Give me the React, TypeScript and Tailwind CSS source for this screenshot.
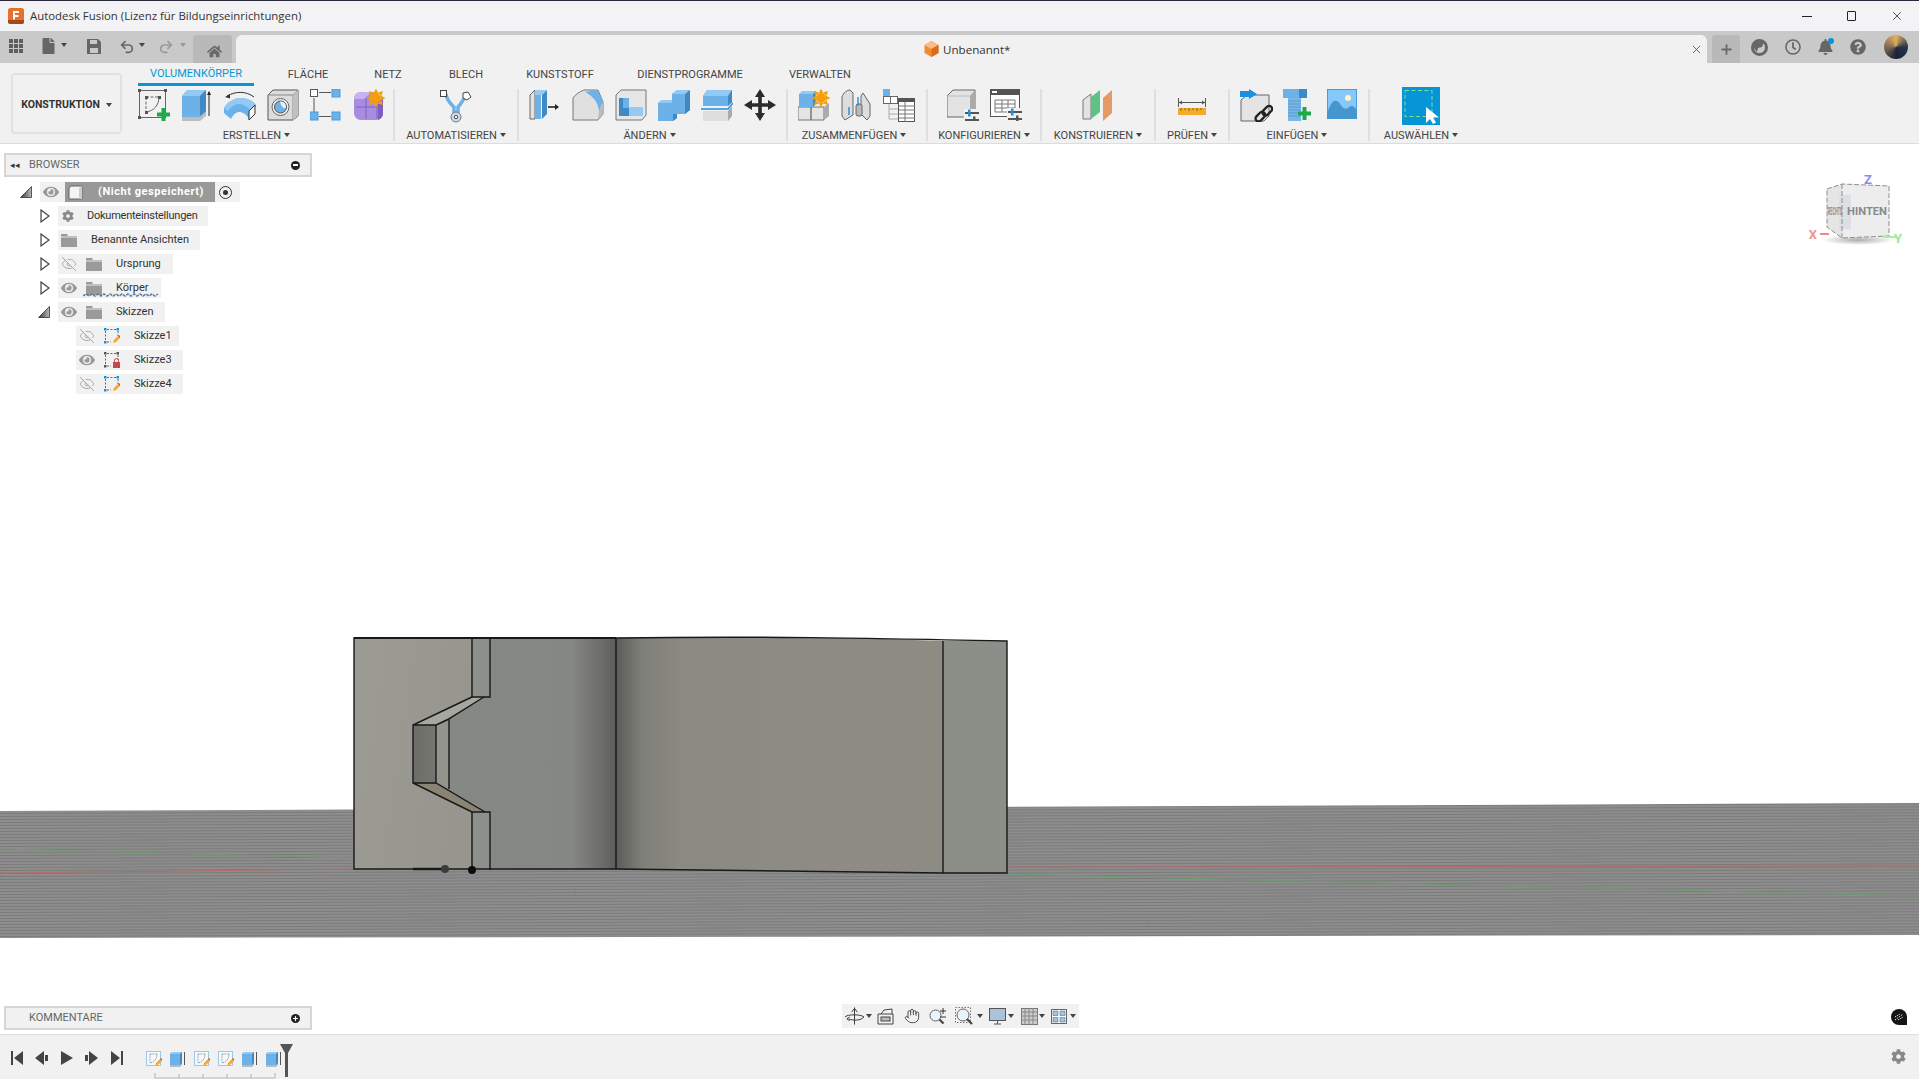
import type { ReactNode } from 'react'
import { FaBell, FaCog, FaEye, FaFile, FaHome, FaQuestionCircle, FaRegClock } from 'react-icons/fa'
import { EyeOff, Hand, Plus, Redo2, Undo2, X } from 'lucide-react'

const B = { light: '#93c9f2', mid: '#6cb2e8', dark: '#3f8ac4', gray: '#d9d9d9', grayD: '#a9a9a9', line: '#555' }

function Caret({ light }: { light?: boolean }) {
    return <span className={`inline-block h-0 w-0 border-x-[3px] border-t-[4px] border-x-transparent ${light ? 'border-t-[#999]' : 'border-t-[#444]'}`} />
}

function Ico({ children, s = 32 }: { children: ReactNode; s?: number }) {
    return <svg width={s} height={s} viewBox={`0 0 ${s} ${s}`}>{children}</svg>
}

const PlusG = ({ x, y }: { x: number; y: number }) => (
    <path d={`M${x + 4.5} ${y}h4v4.500h4.500v4h-4.500v4.500h-4v-4.500h-4.500v-4h4.500z`} fill="#1eaa4c" />
)

const Star = ({ cx, cy }: { cx: number; cy: number }) => (
    <g fill="#f59e0b">
        <circle cx={cx} cy={cy} r="5" />
        <path d={`M${cx} ${cy - 9.500}l2.500 5h-5zM${cx} ${cy + 9.500}l2.500 -5h-5zM${cx - 9.500} ${cy}l5 -2.500v5zM${cx + 9.500} ${cy}l-5 -2.500v5zM${cx - 7} ${cy - 7}l5 1.500l-3.500 3.500zM${cx + 7} ${cy - 7}l-5 1.500l3.500 3.500zM${cx - 7} ${cy + 7}l5 -1.500l-3.500 -3.500zM${cx + 7} ${cy + 7}l-5 -1.500l3.500 -3.500z`} />
    </g>
)

const SketchNew = () => (
    <Ico>
        <g fill="none" stroke="#666">
            <rect x="1.5" y="1.5" width="26" height="27" />
            <path d="M8 8h13M8 8v15" strokeDasharray="3 1.500" />
            <path d="M21 8c0 8 -5 14 -13 15" />
        </g>
        <g fill="#555">
            <rect x="0" y="0" width="3" height="3" /><rect x="26" y="0" width="3" height="3" /><rect x="0" y="27" width="3" height="3" />
            <rect x="7" y="7" width="3" height="3" /><rect x="20" y="7" width="3" height="3" /><rect x="7" y="22" width="3" height="3" />
        </g>
        <PlusG x={19} y={19} />
    </Ico>
)

const Extrude = () => (
    <Ico>
        <path d="M1 7l5 -6h19v25l-6 4H1z" fill={B.mid} />
        <path d="M1 7l5 -6h19l-6 6z" fill={B.light} />
        <path d="M19 7l6 -6v21l-6 5z" fill={B.dark} />
        <path d="M1 28h18l6 -5v4l-6 5H1z" fill="#bdbdbd" />
        <path d="M28 27V3" stroke="#222" fill="none" />
        <path d="M26 6l2 -4l2 4z" fill="#222" />
    </Ico>
)

const Revolve = () => (
    <Ico s={34}>
        <path d="M1 19C5 12 12 9 18 9C24 9 29 11 33 16L26 30C23 25 20 23 16 23C13 23 10 26 8 30L1 24z" fill={B.mid} />
        <path d="M1 19C5 12 12 9 18 9C24 9 29 11 33 16L28 22C24 17 20 15 16 15C11 15 7 19 5 22z" fill={B.light} />
        <path d="M26 22l6 -6v9l-6 6z" fill="#f7f7f7" stroke="#333" />
        <path d="M31 8C23 2 13 2 4 7" stroke="#333" fill="none" />
        <path d="M2 8l5 -3l0 4.500z" fill="#333" />
    </Ico>
)

const Hole = () => (
    <Ico>
        <path d="M1 6l5 -5h25v26l-5 4H1z" fill="#dcdcdc" stroke="#555" />
        <path d="M26 6v25M1 6h25l5 -5" fill="none" stroke="#888" />
        <path d="M26 6l5 -5v26l-5 4z" fill="#c0c0c0" />
        <circle cx="13.500" cy="18" r="8.500" fill="#eee" stroke="#666" />
        <circle cx="13.500" cy="18" r="6" fill={B.mid} stroke="#555" />
        <path d="M13 12.500a5.500 5.500 0 0 1 6 6c-2 2 -5 -1 -6 -6z" fill="#e8f2fb" />
    </Ico>
)

const Derive = () => (
    <Ico>
        <path d="M9 3.500h12M4 9v15M9 27.500h12" stroke="#555" />
        <rect x="0.5" y="0.5" width="7" height="7" fill="#fff" stroke="#555" />
        <rect x="22" y="0" width="8" height="8" fill={B.mid} stroke="#4d9ad6" />
        <rect x="0" y="23" width="8" height="8" fill={B.mid} stroke="#4d9ad6" />
        <rect x="22" y="23" width="8" height="8" fill={B.mid} stroke="#4d9ad6" />
    </Ico>
)

const Purple = () => (
    <Ico>
        <path d="M1 10C1 6 4 3 8 3h14l8 6v15c0 4 -3 7 -7 7H8c-4 0 -7 -3 -7 -7z" fill="#a98be0" />
        <path d="M1 10C1 6 4 3 8 3h10l-7 7z" fill="#c6b2ee" />
        <path d="M3 18h21M13 9v21M24 12v18" stroke="#7f62c2" fill="none" />
        <path d="M25 14l5 -5v16c0 2 -2 5 -5 6z" fill="#7e5fc0" />
        <Star cx={23} cy={9} />
    </Ico>
)

const Auto = () => (
    <Ico s={34}>
        <path d="M7 5c1 7 5 10 8 13l0 6h4l0 -6c3 -3 5 -7 7 -10" fill="none" stroke={B.mid} strokeWidth="3.5" />
        <rect x="1.5" y="1.5" width="6" height="6" fill="#fff" stroke="#444" />
        <path d="M24 4l5 -1l3 5l-4 3l-4 -2z" fill="#fff" stroke="#444" />
        <circle cx="17" cy="28" r="5" fill="#d7d7d7" stroke="#5b7f9e" />
        <circle cx="17" cy="28" r="1.7" fill="#fff" stroke="#555" />
    </Ico>
)

const PressPull = () => (
    <Ico>
        <path d="M1 6l5 -5v29H1z" fill="#e2e2e2" stroke="#666" />
        <path d="M6 1h11l-5 5v24H6z" fill={B.mid} />
        <path d="M6 1h12l-5 5H6z" fill={B.light} />
        <path d="M13 6l5 -5v24l-5 5z" fill={B.dark} />
        <path d="M19 18h8" stroke="#222" strokeWidth="1.6" />
        <path d="M26 15l4 3l-4 3z" fill="#222" />
    </Ico>
)

const Fillet = () => (
    <Ico>
        <path d="M1 9c3 -4 6 -6 11 -8h14l5 12v12l-5 6H1z" fill="#e0e0e0" stroke="#777" />
        <path d="M13 3l12 -2l6 11l-4 10c-1 -9 -6 -15 -14 -19z" fill={B.mid} />
        <path d="M27 22l4 -9v12l-5 6z" fill="#bbb" />
    </Ico>
)

const Shell = () => (
    <Ico>
        <path d="M1 6l5 -5h25v25l-4 5H1z" fill="#e6e6e6" stroke="#777" />
        <path d="M4 9h10v18H4z" fill={B.dark} />
        <path d="M14 18h14v9H14z" fill={B.light} />
        <path d="M8 9h6v10H8z" fill={B.mid} />
    </Ico>
)

const Combine = () => (
    <Ico>
        <path d="M0 14l4 -3h10V5l5 -4h13v20l-5 4h-8v4l-4 3H0z" fill={B.mid} />
        <path d="M14 5l5 -4h13l-5 4zM0 14l4 -3h10v3z" fill={B.light} />
        <path d="M27 5l5 -4v20l-5 4zM15 25l4 0v4l-4 3z" fill={B.dark} />
    </Ico>
)

const Split = () => (
    <Ico>
        <path d="M2 7l4 -6h25v12l-4 4H2z" fill={B.mid} />
        <path d="M2 7l4 -6h25l-4 6z" fill={B.light} />
        <path d="M27 7l4 -6v12l-4 4z" fill={B.dark} />
        <path d="M0 20h27l5 -6" stroke="#1b8fe0" strokeWidth="1.4" fill="none" />
        <path d="M2 22h25l4 -5v10l-4 5H2z" fill="#dedede" />
        <path d="M27 22l4 -5v10l-4 5z" fill="#aaa" />
    </Ico>
)

const Move = () => (
    <Ico>
        <path d="M16 0l5 8h-3.200v6.200H24V11l8 5l-8 5v-3.200h-6.200V24H21l-5 8l-5 -8h3.200v-6.200H8V21l-8 -5l8 -5v3.200h6.200V8H11z" fill="#2b2b2b" />
    </Ico>
)

const NewComp = () => (
    <Ico>
        <path d="M0 18h13v13H0zM13 18h13v13H13z" fill="#e4e4e4" stroke="#777" />
        <path d="M26 18l5 -4v13l-5 4z" fill="#aaa" />
        <path d="M1 5h14v13H1z" fill={B.mid} />
        <path d="M1 5l3 -3h14l-3 3z" fill={B.light} />
        <path d="M15 5l3 -3v13l-3 3z" fill={B.dark} />
        <Star cx={23} cy={9} />
    </Ico>
)

const Joint = () => (
    <Ico>
        <path d="M1 8c1 -4 5 -7 8 -7l3 3v22l-8 5l-3 -4z" fill="#ddd" stroke="#666" />
        <path d="M22 4l7 11v12l-3 4l-6 -6V7z" fill="#ddd" stroke="#666" />
        <rect x="15" y="15" width="6" height="12" rx="2" fill="#bbb" stroke="#666" />
        <path d="M17 8v9M8 18v8" stroke="#1b8fe0" strokeWidth="1.4" />
    </Ico>
)

const TableTree = () => (
    <Ico s={34}>
        <rect x="0" y="0" width="7" height="7" fill={B.mid} />
        <rect x="0.5" y="7.5" width="7" height="7" fill="#fff" stroke="#666" />
        <rect x="7.5" y="7.5" width="7" height="7" fill="#fff" stroke="#666" />
        <path d="M6 15v15h9M6 20h9M6 25h9" stroke="#aaa" fill="none" />
        <rect x="15.5" y="9.5" width="16" height="23" fill="#fff" stroke="#555" />
        <rect x="15" y="9" width="17" height="4" fill="#555" />
        <path d="M16 17h16M16 21h16M16 25h16M16 29h16M22 13v20" stroke="#777" />
    </Ico>
)

const Sliders = ({ x, y }: { x: number; y: number }) => (
    <g>
        <path d={`M${x} ${y}h14M${x} ${y + 7}h14`} stroke="#555" strokeWidth="2" />
        <rect x={x + 3} y={y - 3.5} width="2.5" height="7" fill="#1b8fe0" />
        <rect x={x + 8} y={y + 3.5} width="2.5" height="7" fill="#555" />
    </g>
)

const ConfigCube = () => (
    <Ico>
        <path d="M0 7l6 -6h22v27H0z" fill="#e3e3e3" stroke="#666" />
        <path d="M23 7l5 -6v27h-5z" fill="#aaa" />
        <path d="M0 7h23" stroke="#bbb" />
        <rect x="17" y="20" width="15" height="12" fill="#f1f1f1" />
        <Sliders x={18} y={24} />
    </Ico>
)

const ConfigTable = () => (
    <Ico>
        <rect x="0.5" y="0.5" width="29" height="27" fill="#fff" stroke="#555" />
        <rect x="0" y="0" width="30" height="6" fill="#555" />
        <rect x="2" y="2" width="5" height="2" fill="#fff" />
        <path d="M5 11h20v12H5zM5 15h20M5 19h20M12 11v12M18 11v12" fill="none" stroke="#777" />
        <rect x="17" y="19" width="15" height="13" fill="#f1f1f1" />
        <Sliders x={18} y={23} />
    </Ico>
)

const Plane = () => (
    <Ico>
        <path d="M1 11l8 -6v25H1z" fill="#e3e3e3" stroke="#777" />
        <path d="M9 8l9 -7v22l-9 7z" fill="#5fc184" />
        <path d="M21 9l9 -8v23l-9 8z" fill="#e59a65" />
    </Ico>
)

const Ruler = () => (
    <svg width="28" height="17" viewBox="0 0 28 17">
        <path d="M.5 0v9M27.5 0v9M1 4.5h26" stroke="#555" fill="none" />
        <path d="M1 4.5l3 -2v4zM27 4.5l-3 -2v4z" fill="#555" />
        <rect x="0" y="10" width="28" height="7" fill="#f2ab2c" />
        <path d="M3 10v3M7 10v2M11 10v3M15 10v2M19 10v3M23 10v2" stroke="#8a5d10" />
    </svg>
)

const InsertLink = () => (
    <Ico s={33}>
        <path d="M1 11l6 -5h22v21l-5 5H1z" fill="#e4e4e4" stroke="#666" />
        <path d="M0 2h9V0l8 5l-8 5V8H0z" fill="#1b8fe0" />
        <g fill="none" stroke="#222" strokeWidth="2.4">
            <rect x="22" y="19" width="11" height="6" rx="3" transform="rotate(-45 27 22)" />
            <rect x="15" y="25" width="11" height="6" rx="3" transform="rotate(-45 20 28)" />
        </g>
    </Ico>
)

const Bolt = () => (
    <Ico>
        <path d="M0 0h24v9H0z" fill={B.mid} />
        <path d="M16 0h8v9h-8z" fill={B.dark} />
        <path d="M5 9h13v23H5z" fill="#7ab6e6" />
        <path d="M5 12h13M5 15h13M5 18h13M5 21h13M5 24h13M5 27h13" stroke="#5a9bd2" />
        <PlusG x={15} y={18} />
    </Ico>
)

const ImageIco = () => (
    <Ico s={30}>
        <rect x="0.5" y="0.5" width="29" height="29" fill="#85c8fb" stroke="#4d9ad6" />
        <circle cx="21" cy="9" r="3" fill="#fdf6c3" />
        <path d="M0 25c4 -14 9 -16 13 -10c3 4 5 6 8 4c3 -3 6 -3 9 3v8H0z" fill="#4596cf" />
    </Ico>
)

const SelectIco = () => (
    <div className="relative flex h-[38px] w-[38px] items-center justify-center bg-[#0696d7]">
        <svg width="38" height="38" viewBox="0 0 38 38">
            <rect x="3" y="3.5" width="27" height="26" fill="none" stroke="#7fe08a" strokeDasharray="4 2.5" />
            <path d="M24 20v16l4 -4l3 5l3 -1.5l-3 -5h6z" fill="#fff" />
        </svg>
    </div>
)

function Group({ width, label, children, labelShift }: { width: string; label: string; children: ReactNode; labelShift?: string }) {
    return (
        <div className={`${width} flex h-[52px] shrink-0 flex-col border-r-2 border-r-[#dfdfdf]`}>
            <div className="flex h-[38px] shrink-0 items-start justify-center">{children}</div>
            <div className={`flex flex-1 items-center justify-center gap-[3px] pt-[2px] text-[11px] leading-none text-[#444] ${labelShift ?? ''}`}>
                {label} <Caret />
            </div>
        </div>
    )
}

const Slot = ({ children }: { children: ReactNode }) => (
    <div className="flex h-[34px] w-[43px] items-start justify-center">{children}</div>
)

function EyeOn() {
    return <FaEye className="h-4 w-4 text-[#9a9a9a]" />
}

function EyeHidden() {
    return <EyeOff className="h-4 w-4 text-[#aaa]" strokeWidth={1.5} />
}

function Folder() {
    return (
        <svg width="16" height="13" viewBox="0 0 16 13">
            <path d="M0 0h6l1 2h9v11H0z" fill="#9a9a9a" />
            <path d="M0 3h16" stroke="#e6e6e6" />
        </svg>
    )
}

function TriRight() {
    return (
        <svg width="10" height="14" viewBox="0 0 10 14">
            <path d="M1 1l8 6l-8 6z" fill="#fff" stroke="#444" strokeWidth="1.2" />
        </svg>
    )
}

function TriDown({ className }: { className?: string }) {
    return (
        <svg width="12" height="12" viewBox="0 0 12 12" className={className}>
            <defs>
                <linearGradient id="tri" x1="0" x2="1" y1="0" y2="0"><stop offset="0" stopColor="#333" /><stop offset="1" stopColor="#bbb" /></linearGradient>
            </defs>
            <path d="M0.5 11.5L11.5 0.5v11z" fill="url(#tri)" stroke="#333" strokeWidth="0.8" />
        </svg>
    )
}

function MiniSketch({ lock }: { lock?: boolean }) {
    const c = lock ? '#555' : '#1b8fe0'
    return (
        <svg width="16" height="16" viewBox="0 0 16 16">
            <path d="M3 1.5h9M1.5 3v9M14 3v5M3 14h4" stroke="#666" strokeDasharray="2 1.5" />
            <g fill={c}>
                <rect x="0" y="0" width="2.5" height="2.5" /><rect x="12.5" y="0" width="2.5" height="2.5" /><rect x="0" y="13" width="2.5" height="2.5" />
            </g>
            {lock ? (
                <g><rect x="9" y="10" width="7" height="6" fill="#c9464e" /><path d="M10.5 10V8.5a2 2 0 0 1 4 0V10" fill="none" stroke="#c9464e" /></g>
            ) : (
                <g><path d="M9 15l1 -3l4 -4l2 2l-4 4z" fill="#f2ab2c" /><path d="M14 8l1 -1l1.5 1.5l-0.8 1.4z" fill="#e9473f" /></g>
            )}
        </svg>
    )
}

function TimeSketch() {
    return (
        <svg width="16" height="16" viewBox="0 0 16 16">
            <rect x="0.5" y="0.5" width="14" height="14" fill="#f7f7f7" stroke="#9cc8ea" />
            <path d="M4 3v9M4 3h7M11 3c0 5 -3 8 -7 9" stroke="#7aa" fill="none" strokeDasharray="1.5 1" />
            <path d="M9 15l1 -3l4 -4l2 2l-4 4z" fill="#f2ab2c" />
            <path d="M14 8l1 -1l1.5 1.5l-0.8 1.4z" fill="#e9473f" />
        </svg>
    )
}

function TimeBody() {
    return (
        <svg width="16" height="16" viewBox="0 0 16 16">
            <path d="M0 3l2 -2h10v12l-2 2H0z" fill={B.mid} />
            <path d="M0 3l2 -2h10l-2 2z" fill={B.light} />
            <path d="M10 3l2 -2v12l-2 2z" fill={B.dark} />
            <path d="M14.5 1v13" stroke="#555" />
            <path d="M0 14h10l2 -2v2l-2 2H0z" fill="#bbb" />
        </svg>
    )
}

function Scene() {
    return (
        <svg className="absolute inset-0 h-full w-full" viewBox="0 144 1919 890">
            <defs>
                <pattern id="stripes" width="4" height="3" patternUnits="userSpaceOnUse" patternTransform="rotate(-0.2)">
                    <rect width="4" height="3" fill="#8d8d8d" />
                    <rect width="4" height="1" fill="#7b7b7b" />
                </pattern>
                <linearGradient id="left" x1="0" x2="1" y1="0" y2="0.3"><stop offset="0" stopColor="#9c9c94" /><stop offset="1" stopColor="#96968e" /></linearGradient>
                <linearGradient id="mid" x1="0" x2="1" y1="0" y2="0">
                    <stop offset="0" stopColor="#868983" /><stop offset="0.75" stopColor="#858782" /><stop offset="0.92" stopColor="#6c6d68" /><stop offset="1" stopColor="#5d5e5a" />
                </linearGradient>
                <linearGradient id="big" x1="0" x2="1" y1="0" y2="0">
                    <stop offset="0" stopColor="#5c5d59" /><stop offset="0.08" stopColor="#7f7f79" /><stop offset="0.2" stopColor="#8a8a80" /><stop offset="0.5" stopColor="#8d8b84" /><stop offset="1" stopColor="#8d8c83" />
                </linearGradient>
                <linearGradient id="pocket" x1="0" x2="1" y1="0" y2="0"><stop offset="0" stopColor="#6c6d68" /><stop offset="1" stopColor="#75766f" /></linearGradient>
            </defs>
            <path d="M0 811L1919 803V935L0 938z" fill="url(#stripes)" />
            <path d="M0 873L354 869M1007 867L1919 866" stroke="#b06a6a" />
            <path d="M0 849L354 858M1007 874L1919 896" stroke="#6f9a6f" />
            {/* inner face up to the first bend, runs behind the notch */}
            <path d="M440 638H616V869H440z" fill="url(#mid)" />
            <path d="M616 638C760 636 860 638 943 641V873L616 869z" fill="url(#big)" />
            <path d="M943 641H1007V873H943z" fill="#8c8e88" />
            {/* left face */}
            <path d="M354 638H472V697L413 725V783L472 812V870H354z" fill="url(#left)" />
            <path d="M472 638H490V697H472zM472 812H490V870H472z" fill="#8d908a" />
            {/* notch */}
            <path d="M413 725L472 697H484L436 725z" fill="#a7a79f" />
            <path d="M413 783H436L485 812H472z" fill="#8a8474" />
            <path d="M413 725H436V783H413z" fill="url(#pocket)" />
            <path d="M436 725L449 719V789L436 783z" fill="#94948c" />
            <g fill="none" stroke="#16181a" strokeWidth="1.4">
                <path d="M354 638H616C760 636 860 638 1007 641V873L943 873L616 869H354z" />
                <path d="M354 638H616" strokeWidth="2" />
                <path d="M616 638V869M943 641V873" />
                <path d="M472 638V697M490 638V697H472M472 812H490V870M472 812V870" />
                <path d="M472 697L413 725V783L472 812M484 697L449 719V789M436 725V783M413 725H436M413 783H436L485 812M436 725L449 719" />
                <path d="M413 869H445" strokeWidth="2.4" />
            </g>
            <circle cx="445" cy="869" r="4" fill="#3c3c3c" />
            <circle cx="472" cy="870" r="4" fill="#0c0c0c" />
        </svg>
    )
}

function ViewCube() {
    return (
        <div className="absolute left-[1790px] top-[16px] h-[90px] w-[129px]">
            <svg width="129" height="90" viewBox="0 0 129 90">
                <defs>
                    <radialGradient id="shadow"><stop offset="0" stopColor="#888" stopOpacity="0.7" /><stop offset="1" stopColor="#888" stopOpacity="0" /></radialGradient>
                </defs>
                <ellipse cx="68" cy="80" rx="36" ry="5" fill="url(#shadow)" />
                <path d="M37 29L52 24V78L37 67z" fill="#e5e5e5" />
                <path d="M52 24L99 26V76L52 78z" fill="#ededed" />
                <rect x="49" y="35" width="12" height="34" fill="#dcdfe3" />
                <path d="M37 29L52 24L99 26V76L52 78L37 67zM52 24V78" fill="none" stroke="#8d8d8d" strokeDasharray="5 2" />
                <path d="M30 74h9" stroke="#f08a8a" strokeWidth="2" />
                <path d="M93 77h13" stroke="#a8efa8" strokeWidth="2" />
                <text x="77" y="55" textAnchor="middle" fontSize="11.5" fontWeight="700" fill="#8a8a8a" fontFamily="Roboto" textLength="40" lengthAdjust="spacingAndGlyphs">HINTEN</text>
                <text transform="translate(45 55) scale(0.38 1)" textAnchor="middle" fontSize="10" fontWeight="700" fill="#8a8a8a" fontFamily="Roboto">RECHTS</text>
                <text x="78" y="24" textAnchor="middle" fontSize="13" fontWeight="700" fill="#8a8af8" fontFamily="Roboto">Z</text>
                <text x="23" y="79" textAnchor="middle" fontSize="13" fontWeight="700" fill="#f59090" fontFamily="Roboto">X</text>
                <text x="108" y="83" textAnchor="middle" fontSize="13" fontWeight="700" fill="#96e896" fontFamily="Roboto">Y</text>
            </svg>
        </div>
    )
}

function NavBar() {
    return (
        <div className="absolute bottom-[6px] left-[842px] flex h-6 w-[237px] items-center bg-[#f1f1f1] pl-[3px] text-[#444]">
            <svg width="19" height="20" viewBox="0 0 20 20" fill="none" stroke="#333">
                <path d="M10 1v18M0 11c3 -3 16 -3 20 0c-3 4 -12 4 -16 2M7 6l3 -4l3 4" />
                <path d="M5 11l-3 2l3 2" />
            </svg>
            <span className="ml-[2px] flex w-[11px]"><Caret /></span>
            <svg width="17" height="17" viewBox="0 0 17 17" fill="none" stroke="#444">
                <path d="M1 6h15v10H1zM4 6l3 -4l8 -1v5" /><rect x="4" y="9" width="9" height="4" fill="#bbb" />
            </svg>
            <Hand className="ml-[10px] h-4 w-4 text-[#444]" strokeWidth={1.4} />
            <svg width="18" height="16" viewBox="0 0 18 16" fill="none" className="ml-[9px]">
                <circle cx="6.5" cy="7.5" r="5.5" fill="#e8f4fb" stroke="#666" /><path d="M10.5 11.5l4 4" stroke="#444" strokeWidth="2.2" />
                <path d="M11 3h6M14 0v6M11 9h6" stroke="#333" />
            </svg>
            <svg width="18" height="18" viewBox="0 0 18 18" fill="none" className="ml-[8px]">
                <rect x="0.5" y="0.5" width="15" height="15" stroke="#777" strokeDasharray="1.5 1.5" />
                <circle cx="8" cy="8" r="6" fill="#e8f4fb" stroke="#666" /><path d="M12 12l5 5" stroke="#444" strokeWidth="2.2" />
            </svg>
            <span className="ml-[4px] flex w-[10px]"><Caret /></span>
            <svg width="17" height="17" viewBox="0 0 17 17" className="ml-[2px]">
                <rect x="0.5" y="0.5" width="16" height="12" fill="#a9c4da" stroke="#555" /><path d="M5 16h7M8.5 13v3" stroke="#555" />
            </svg>
            <span className="ml-[2px] flex w-[11px]"><Caret /></span>
            <svg width="17" height="17" viewBox="0 0 17 17" className="ml-[2px]">
                <rect x="0.5" y="0.5" width="16" height="16" fill="#ccc" stroke="#777" />
                <path d="M4 0v17M8 0v17M12 0v17M0 4h17M0 8h17M0 12h17" stroke="#888" />
            </svg>
            <span className="ml-[1px] flex w-[10px]"><Caret /></span>
            <svg width="16" height="15" viewBox="0 0 16 15" className="ml-[2px]">
                <rect x="0.5" y="0.5" width="15" height="14" fill="#fff" stroke="#666" />
                <path d="M2 2h5v4.500H2zM9 2h5v4.500H9zM2 8.500h5V13H2zM9 8.500h5V13H9z" fill="#9cc6e8" stroke="#555" strokeWidth="0.5" />
            </svg>
            <span className="ml-[3px] flex"><Caret /></span>
        </div>
    )
}

function Browser() {
    return (
        <div className="absolute left-[4px] top-[9px] w-[308px] text-[11px] text-[#333]">
            <div className="flex h-6 items-center border-2 border-[#d6d6d6] bg-[#f1f1f1] pl-[4px] pr-[10px] text-[#666]">
                <span className="w-[19px] text-[9px] leading-none text-[#333]">◂◂</span>
                <span className="text-[11px]">BROWSER</span>
                <span className="ml-auto flex h-[9px] w-[9px] items-center justify-center rounded-full bg-[#222]"><span className="h-[1.5px] w-[5px] bg-white" /></span>
            </div>
            <div className="mt-[5px] flex flex-col gap-1">
                <div className="flex h-5 items-center">
                    <TriDown className="ml-4" />
                    <div className="ml-2 flex h-5 w-[200px] items-center bg-[#f1f1f1]">
                        <span className="ml-[3px]"><EyeOn /></span>
                        <div className="ml-[6px] flex h-5 w-[150px] items-center bg-[#999] text-white">
                            <svg width="15" height="15" viewBox="0 0 15 15" className="ml-[3px]"><path d="M1 3l2 -2h11v13H1z" fill="#f5f5f5" stroke="#666" /><path d="M11 3l3 -2v13l-3 0z" fill="#ccc" /></svg>
                            <span className="ml-[15px] font-bold tracking-[0.55px]">(Nicht gespeichert)</span>
                        </div>
                        <span className="ml-1 flex h-[13px] w-[13px] items-center justify-center rounded-full border border-[#333]"><span className="h-[5px] w-[5px] rounded-full bg-[#333]" /></span>
                    </div>
                </div>
                <div className="flex h-5 items-center pl-9">
                    <TriRight />
                    <div className="ml-2 flex h-5 w-[150px] items-center bg-[#f1f1f1]">
                        <FaCog className="ml-1 h-3 w-3 text-[#8a8a8a]" />
                        <span className="ml-[13px] tracking-[-0.24px]">Dokumenteinstellungen</span>
                    </div>
                </div>
                <div className="flex h-5 items-center pl-9">
                    <TriRight />
                    <div className="ml-2 flex h-5 w-[142px] items-center bg-[#f1f1f1]">
                        <span className="ml-[3px] flex"><Folder /></span>
                        <span className="ml-[14px]">Benannte Ansichten</span>
                    </div>
                </div>
                <div className="flex h-5 items-center pl-9">
                    <TriRight />
                    <div className="ml-2 flex h-5 w-[115px] items-center bg-[#f1f1f1]">
                        <span className="ml-[3px]"><EyeHidden /></span>
                        <span className="ml-[9px] flex"><Folder /></span>
                        <span className="ml-[14px]">Ursprung</span>
                    </div>
                </div>
                <div className="flex h-5 items-center pl-9">
                    <TriRight />
                    <div className="relative ml-2 flex h-5 w-[103px] items-center bg-[#f1f1f1]">
                        <span className="ml-[3px]"><EyeOn /></span>
                        <span className="ml-[9px] flex"><Folder /></span>
                        <span className="ml-[14px]">Körper</span>
                        <svg className="absolute bottom-[1px] left-[25px]" width="76" height="4" viewBox="0 0 76 4">
                            <path d="M0 3L3 1L6 3L9 1L12 3L15 1L18 3L21 1L24 3L27 1L30 3L33 1L36 3L39 1L42 3L45 1L48 3L51 1L54 3L57 1L60 3L63 1L66 3L69 1L72 3L75 1" stroke="#5f789e" fill="none" strokeWidth="1.5" strokeDasharray="3 1" />
                        </svg>
                    </div>
                </div>
                <div className="flex h-5 items-center pl-[34px]">
                    <TriDown />
                    <div className="ml-2 flex h-5 w-[107px] items-center bg-[#f1f1f1]">
                        <span className="ml-[3px]"><EyeOn /></span>
                        <span className="ml-[9px] flex"><Folder /></span>
                        <span className="ml-[14px]">Skizzen</span>
                    </div>
                </div>
                <div className="flex h-5 items-center pl-[72px]">
                    <div className="flex h-5 w-[103px] items-center bg-[#f1f1f1]">
                        <span className="ml-[3px]"><EyeHidden /></span>
                        <span className="ml-[9px] flex"><MiniSketch /></span>
                        <span className="ml-[14px]">Skizze1</span>
                    </div>
                </div>
                <div className="flex h-5 items-center pl-[72px]">
                    <div className="flex h-5 w-[107px] items-center bg-[#f1f1f1]">
                        <span className="ml-[3px]"><EyeOn /></span>
                        <span className="ml-[9px] flex"><MiniSketch lock /></span>
                        <span className="ml-[14px]">Skizze3</span>
                    </div>
                </div>
                <div className="flex h-5 items-center pl-[72px]">
                    <div className="flex h-5 w-[107px] items-center bg-[#f1f1f1]">
                        <span className="ml-[3px]"><EyeHidden /></span>
                        <span className="ml-[9px] flex"><MiniSketch /></span>
                        <span className="ml-[14px]">Skizze4</span>
                    </div>
                </div>
            </div>
        </div>
    )
}

function Timeline() {
    return (
        <div className="flex h-[45px] shrink-0 items-start border-t border-t-[#e0e0e0] bg-[#f1f1f1] pl-1 pt-4">
            <div className="flex w-[25px] justify-center"><svg width="12" height="14" viewBox="0 0 12 14"><path d="M0 0h2v14H0zM12 0v14L3 7z" fill="#444" /></svg></div>
            <div className="flex w-[25px] justify-center"><svg width="13" height="14" viewBox="0 0 13 14"><path d="M0 7l9 -7v14zM10 4h3v6h-3z" fill="#444" /></svg></div>
            <div className="flex w-[25px] justify-center"><svg width="12" height="14" viewBox="0 0 12 14"><path d="M0 0l12 7l-12 7z" fill="#444" /></svg></div>
            <div className="flex w-[25px] justify-center"><svg width="13" height="14" viewBox="0 0 13 14"><path d="M13 7L4 0v14zM0 4h3v6H0z" fill="#444" /></svg></div>
            <div className="flex w-[25px] justify-center"><svg width="12" height="14" viewBox="0 0 12 14"><path d="M0 0l9 7l-9 7zM10 0h2v14h-2z" fill="#444" /></svg></div>
            <div className="relative ml-[13px] flex">
                <div className="flex w-6 justify-center"><TimeSketch /></div>
                <div className="flex w-6 justify-center"><TimeBody /></div>
                <div className="flex w-6 justify-center"><TimeSketch /></div>
                <div className="flex w-6 justify-center"><TimeSketch /></div>
                <div className="flex w-6 justify-center"><TimeBody /></div>
                <div className="flex w-6 justify-center"><TimeBody /></div>
                <svg className="absolute left-[12px] top-[22px]" width="122" height="6" viewBox="0 0 122 6">
                    <path d="M1 0v5h120V0M25 1v4M49 1v4M73 1v4M97 1v4" fill="none" stroke="#c9c9c9" strokeWidth="1.6" />
                </svg>
                <svg className="absolute left-[138px] top-[-7px]" width="13" height="33" viewBox="0 0 13 33">
                    <path d="M0 0h13L8 9v24H5V9z" fill="#555" />
                </svg>
            </div>
            <FaCog className="ml-auto mr-[13px] mt-[-2px] h-[15px] w-[15px] text-[#888]" />
        </div>
    )
}

function App() {
    return (
        <div className="flex h-screen w-full flex-col overflow-hidden bg-white font-['Roboto',sans-serif] text-[#333]">
            {/* Title bar */}
            <div className="h-px shrink-0 bg-[#2a2a3a]" />
            <div className="flex h-[30px] shrink-0 items-center bg-[#f3f2f4] pl-2">
                <svg width="16" height="16" viewBox="0 0 16 16">
                    <rect width="16" height="16" rx="2.5" fill="#e8702a" />
                    <path d="M0 12h16v1.500a2.500 2.500 0 0 1 -2.500 2.500h-11a2.500 2.500 0 0 1 -2.500 -2.500z" fill="#a5471b" />
                    <path d="M5 3h6v2H7v2h3.500v2H7v2.500H5z" fill="#fff" />
                </svg>
                <span className="ml-[6px] font-['Open_Sans',sans-serif] text-[11.4px] text-[#333]">Autodesk Fusion (Lizenz für Bildungseinrichtungen)</span>
                <div className="ml-auto flex items-center">
                    <div className="flex w-[45px] justify-center"><span className="h-px w-[10px] bg-[#222]" /></div>
                    <div className="flex w-[45px] justify-center"><span className="h-[10px] w-[9px] rounded-[1px] border border-[#222]" /></div>
                    <div className="flex w-[45px] justify-center"><X className="h-[14px] w-[14px] text-[#222]" strokeWidth={1.3} /></div>
                </div>
            </div>

            {/* Tab bar */}
            <div className="flex h-8 shrink-0 items-end bg-[#c9c9c9] font-['Open_Sans',sans-serif]">
                <div className="flex h-full w-[193px] items-start pt-[8px] pl-[9px] text-[#666]">
                    <svg width="14" height="14" viewBox="0 0 14 14" fill="#5e5e5e"><path d="M0 0h4v4H0zM5 0h4v4H5zM10 0h4v4h-4zM0 5h4v4H0zM5 5h4v4H5zM10 5h4v4h-4zM0 10h4v4H0zM5 10h4v4H5zM10 10h4v4h-4z" /></svg>
                    <FaFile className="ml-[19px] mt-[-1px] h-4 w-[13px]" />
                    <span className="ml-[6px] mt-[4px] flex"><Caret /></span>
                    <svg width="14" height="15" viewBox="0 0 14 15" className="ml-[20px]"><path d="M0 0h11l3 3v12H0z" fill="#666" /><path d="M3 1h7v4H3zM3 9h8v5H3z" fill="#c9c9c9" /></svg>
                    <Undo2 className="ml-[18px] h-4 w-4" strokeWidth={2.6} />
                    <span className="ml-[4px] mt-[4px] flex"><Caret /></span>
                    <Redo2 className="ml-[13px] h-4 w-4 text-[#999]" strokeWidth={2.6} />
                    <span className="ml-[6px] mt-[4px] flex"><Caret light /></span>
                </div>
                <div className="flex h-7 w-[39px] items-center justify-center rounded-t-[3px] bg-[#b9b9b9] pl-[3px]">
                    <FaHome className="mt-1 h-[15px] w-[15px] text-[#6a6a6a]" />
                </div>
                <div className="ml-1 flex h-7 w-[1471px] items-center rounded-tl-[6px] rounded-tr-[6px] bg-[#f1f1f1] pl-[688px]">
                    <svg width="15" height="16" viewBox="0 0 15 16">
                        <path d="M7.500 0l7 4v8l-7 4l-7 -4V4z" fill="#f08c2e" />
                        <path d="M7.500 0l7 4l-7 4l-7 -4z" fill="#f9bd83" />
                        <path d="M7.500 8l7 -4v8l-7 4z" fill="#d86c18" />
                    </svg>
                    <span className="ml-[4px] pt-[2px] text-[11.6px] text-[#333]">Unbenannt*</span>
                    <X className="ml-[680px] h-[13px] w-[13px] text-[#555]" strokeWidth={1.6} />
                </div>
                <div className="ml-[5px] flex h-7 w-[28px] items-center justify-center rounded-t-[3px] bg-[#b9b9b9]">
                    <Plus className="h-[15px] w-[15px] text-[#6a6a6a]" strokeWidth={3} />
                </div>
                <div className="flex h-full flex-1 items-center pl-[11px] text-[#666]">
                    <svg width="17" height="17" viewBox="0 0 17 17"><circle cx="8.500" cy="8.500" r="7" fill="none" stroke="#666" strokeWidth="3" /><path d="M5 2c3 2 6 1 8 0l-2 6l-4 1l-1 4l-4 -5z" fill="#666" /></svg>
                    <FaRegClock className="ml-[17px] h-4 w-4" />
                    <span className="relative ml-[17px] flex">
                        <FaBell className="h-4 w-[15px]" />
                        <span className="absolute right-[-1px] top-[-1px] h-[6px] w-[6px] rounded-full bg-[#0696d7]" />
                    </span>
                    <FaQuestionCircle className="ml-[17px] h-4 w-4" />
                    <div className="ml-[18px] h-6 w-6 rounded-full bg-[conic-gradient(#e0b060,#27344f,#1a2336,#7f6a55,#e0b060)]" />
                </div>
            </div>

            {/* Ribbon */}
            <div className="flex h-[81px] shrink-0 border-b border-b-[#dcdcdc] bg-[#f1f1f1]">
                <div className="ml-[11px] mt-[10px] flex h-[61px] w-[111px] items-center justify-center gap-[6px] rounded-[4px] border-2 border-[#e2e2e2] pt-[3px] text-[10.5px] font-bold text-[#333]">
                    KONSTRUKTION <Caret />
                </div>
                <div className="ml-2 flex flex-col">
                    <div className="flex h-[23px] text-[11px] text-[#444]">
                        <div className="ml-2 flex w-[116px] items-center justify-center border-b-[3px] border-b-[#0696d7] pt-[3px] text-[#0696d7]">VOLUMENKÖRPER</div>
                        <div className="ml-6 flex w-[60px] items-center justify-center pt-[2px]">FLÄCHE</div>
                        <div className="ml-5 flex w-[60px] items-center justify-center pt-[2px]">NETZ</div>
                        <div className="ml-[18px] flex w-[60px] items-center justify-center pt-[2px]">BLECH</div>
                        <div className="ml-6 flex w-[80px] items-center justify-center pt-[2px]">KUNSTSTOFF</div>
                        <div className="ml-[35px] flex w-[110px] items-center justify-center pt-[2px]">DIENSTPROGRAMME</div>
                        <div className="ml-10 flex w-[70px] items-center justify-center pt-[2px]">VERWALTEN</div>
                    </div>
                    <div className="mt-[3px] flex">
                        <Group width="w-[265px]" label="ERSTELLEN" labelShift="pr-[10px]">
                            <Slot><SketchNew /></Slot>
                            <Slot><Extrude /></Slot>
                            <Slot><Revolve /></Slot>
                            <Slot><Hole /></Slot>
                            <Slot><Derive /></Slot>
                            <Slot><Purple /></Slot>
                        </Group>
                        <Group width="w-[124px]" label="AUTOMATISIEREN">
                            <Slot><Auto /></Slot>
                        </Group>
                        <Group width="w-[269px]" label="ÄNDERN" labelShift="pr-[6px]">
                            <Slot><PressPull /></Slot>
                            <Slot><Fillet /></Slot>
                            <Slot><Shell /></Slot>
                            <Slot><Combine /></Slot>
                            <Slot><Split /></Slot>
                            <Slot><Move /></Slot>
                        </Group>
                        <Group width="w-[140px]" label="ZUSAMMENFÜGEN" labelShift="pr-[6px]">
                            <Slot><NewComp /></Slot>
                            <Slot><Joint /></Slot>
                            <Slot><TableTree /></Slot>
                        </Group>
                        <Group width="w-[114px]" label="KONFIGURIEREN">
                            <Slot><ConfigCube /></Slot>
                            <Slot><ConfigTable /></Slot>
                        </Group>
                        <Group width="w-[114px]" label="KONSTRUIEREN">
                            <Slot><Plane /></Slot>
                        </Group>
                        <Group width="w-[74px]" label="PRÜFEN">
                            <div className="mt-[9px]"><Ruler /></div>
                        </Group>
                        <Group width="w-[140px]" label="EINFÜGEN" labelShift="pr-[4px]">
                            <Slot><InsertLink /></Slot>
                            <Slot><Bolt /></Slot>
                            <Slot><ImageIco /></Slot>
                        </Group>
                        <div className="flex h-[52px] w-[102px] flex-col items-center">
                            <div className="mt-[-2px] h-[40px] shrink-0"><SelectIco /></div>
                            <div className="flex flex-1 items-center gap-[3px] pt-[2px] text-[11px] leading-none text-[#444]">AUSWÄHLEN <Caret /></div>
                        </div>
                    </div>
                </div>
            </div>

            {/* Canvas */}
            <div className="relative min-h-0 flex-1 bg-white">
                <Scene />
                <Browser />
                <ViewCube />
                <div className="absolute bottom-[4px] left-[4px] flex h-6 w-[308px] items-center border-2 border-[#d6d6d6] bg-[#f1f1f1] pl-[23px] pr-[10px] text-[11px] text-[#666]">
                    KOMMENTARE
                    <span className="ml-auto flex h-[9px] w-[9px] items-center justify-center rounded-full bg-[#222] text-white"><Plus className="h-[7px] w-[7px]" strokeWidth={4} /></span>
                </div>
                <NavBar />
                <div className="absolute bottom-[9px] right-[12px] flex h-4 w-4 items-center justify-center rounded-full rounded-br-[2px] bg-[#151515]">
                    <svg width="10" height="8" viewBox="0 0 10 8"><path d="M1 7L9 1M1 4L6 1M4 7L9 4" stroke="#ddd" strokeDasharray="1.500 1" /></svg>
                </div>
            </div>

            <Timeline />
        </div>
    )
}

export default App
